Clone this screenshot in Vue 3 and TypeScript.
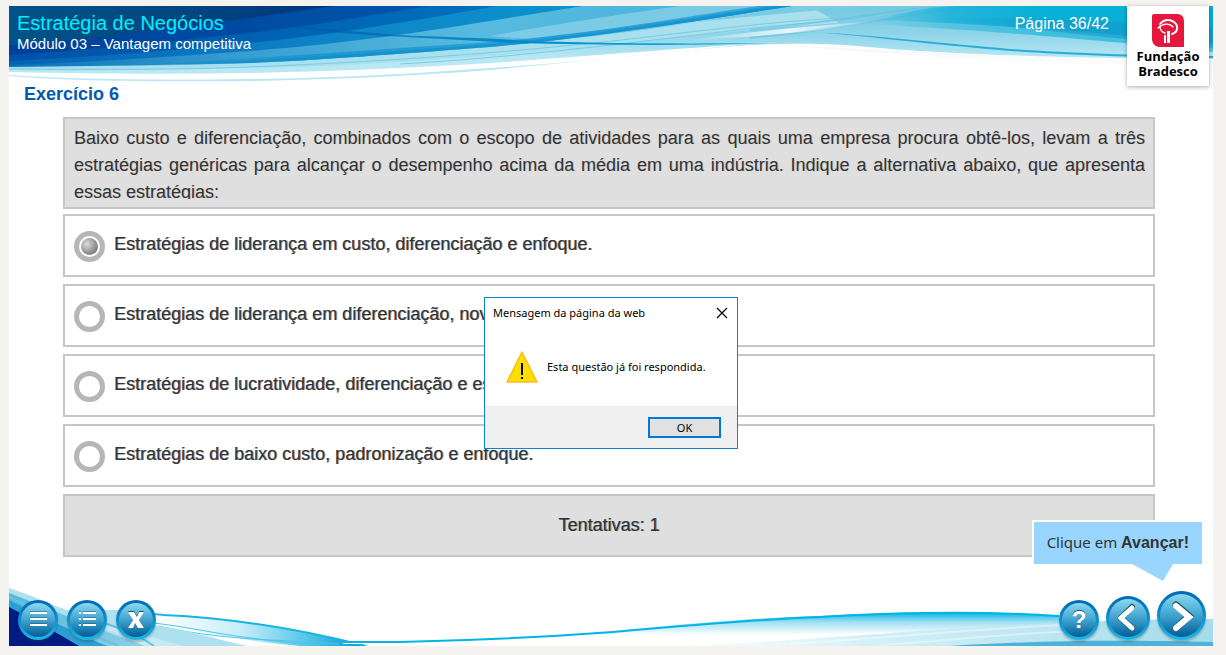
<script setup lang="ts">
import { ref } from 'vue'

const options: string[] = [
  'Estratégias de liderança em custo, diferenciação e enfoque.',
  'Estratégias de liderança em diferenciação, novidade e enfoque.',
  'Estratégias de lucratividade, diferenciação e escopo.',
  'Estratégias de baixo custo, padronização e enfoque.',
]
const selected = ref(0)
const attempts = ref(1)
const dialogOpen = ref(true)
</script>

<template>
  <div class="stage">
    <header class="header">
      <svg class="wave" viewBox="0 0 1204 78" preserveAspectRatio="none" aria-hidden="true">
        <defs>
          <linearGradient id="hNavy" x1="0" y1="0" x2="1" y2="0">
            <stop offset="0" stop-color="#005487" />
            <stop offset=".55" stop-color="#00457f" />
            <stop offset="1" stop-color="#003580" />
          </linearGradient>
          <linearGradient id="hRoyal" x1="0" y1="0" x2="1" y2="0">
            <stop offset="0" stop-color="#003f98" />
            <stop offset="1" stop-color="#0055aa" />
          </linearGradient>
          <linearGradient id="hBlue" x1="0" y1="0" x2="1" y2="0">
            <stop offset="0" stop-color="#0052a8" />
            <stop offset="1" stop-color="#0070bd" />
          </linearGradient>
          <linearGradient id="hSky" x1="0" y1="0" x2="1" y2="0">
            <stop offset="0" stop-color="#0462b2" />
            <stop offset=".6" stop-color="#0f86c8" />
            <stop offset="1" stop-color="#0a92cd" />
          </linearGradient>
          <linearGradient id="hPale" x1="0" y1="0" x2="784" y2="0" gradientUnits="userSpaceOnUse">
            <stop offset="0" stop-color="#0a70bb" />
            <stop offset=".3" stop-color="#379fd0" />
            <stop offset=".6" stop-color="#58bade" />
            <stop offset="1" stop-color="#45b0da" />
          </linearGradient>
          <linearGradient id="hStreak" x1="60" y1="0" x2="784" y2="0" gradientUnits="userSpaceOnUse">
            <stop offset="0" stop-color="#0a80c4" stop-opacity="0" />
            <stop offset=".3" stop-color="#0a8ccc" stop-opacity=".6" />
            <stop offset="1" stop-color="#0a8fcf" stop-opacity=".6" />
          </linearGradient>
          <linearGradient id="hMist" x1="0" y1="0" x2="0" y2="1">
            <stop offset="0" stop-color="#74c8e2" />
            <stop offset=".35" stop-color="#8dd3e8" />
            <stop offset=".7" stop-color="#b9e8f4" />
          </linearGradient>
          <linearGradient id="hTeal" x1="840" y1="0" x2="1040" y2="0" gradientUnits="userSpaceOnUse">
            <stop offset="0" stop-color="#3fbbdc" stop-opacity="0" />
            <stop offset=".5" stop-color="#16b0d8" stop-opacity=".7" />
            <stop offset="1" stop-color="#06b0d6" />
          </linearGradient>
          <linearGradient id="hDeep" x1="880" y1="0" x2="1060" y2="0" gradientUnits="userSpaceOnUse">
            <stop offset="0" stop-color="#2c9fd0" stop-opacity="0" />
            <stop offset="1" stop-color="#1894c8" stop-opacity=".55" />
          </linearGradient>
          <linearGradient id="hCross" x1="220" y1="0" x2="750" y2="0" gradientUnits="userSpaceOnUse">
            <stop offset="0" stop-color="#00408c" stop-opacity=".2" />
            <stop offset=".3" stop-color="#0068b0" stop-opacity=".7" />
            <stop offset=".6" stop-color="#0090ce" />
            <stop offset="1" stop-color="#1fb2de" />
          </linearGradient>
          <linearGradient id="hGleam" x1="680" y1="0" x2="880" y2="0" gradientUnits="userSpaceOnUse">
            <stop offset="0" stop-color="#ffffff" stop-opacity="0" />
            <stop offset=".5" stop-color="#ffffff" stop-opacity=".8" />
            <stop offset="1" stop-color="#ffffff" stop-opacity="0" />
          </linearGradient>
          <linearGradient id="hShade" x1="0" y1="0" x2="0" y2="1">
            <stop offset="0" stop-color="#f4f5f6" />
            <stop offset="1" stop-color="#ffffff" />
          </linearGradient>
        </defs>
        <path d="M760 38C900 46 1010 52 1204 54V62C1050 60 920 52 760 38Z" fill="url(#hShade)" />
        <path d="M0 0H1204V53C1090 53 950 49 870 42C820 37 790 37 740 39C650 46 560 57 481 64C391 71 300 74 241 75C150 76 60 75 0 70Z" fill="url(#hMist)" />
        <path d="M0 66C100 68 170 68 241 67C330 65 400 62 481 57C600 49 680 41 780 36L740 38C600 53 540 58 481 62C400 68 330 72 241 73C150 74 80 74 0 69Z" fill="#fff" />
        <path d="M0 0H800L830 17C720 24 600 40 481 50C391 56 320 61 241 62C140 64 70 65 0 64Z" fill="#a9e0ee" />
        <path d="M0 63C120 64 190 63 241 61C391 55 500 46 604 35C690 25 760 16 830 12M391 58C500 52 620 37 720 25C760 20 800 17 850 12" fill="none" stroke="#7ccbe4" stroke-width="1" />
        <path d="M0 0H784C700 13 600 30 481 41C400 47 330 53 241 57C160 59 80 60 0 61Z" fill="url(#hPale)" />
        <path d="M560 33C640 20 720 12 860 0H784C720 10 640 25 560 33Z" fill="#7bcbe4" />
        <path d="M481 30C560 16 620 7 671 0H760C690 11 600 24 520 33Z" fill="#8ad2e8" opacity=".75" />
        <path d="M100 60C170 58 300 48 481 36C600 26 690 8 750 0H784C700 13 600 30 481 41C400 47 330 53 241 57C190 59 140 60 100 60Z" fill="url(#hStreak)" />
        <path d="M160 59C260 54 380 46 481 38C600 28 700 10 765 0H784C700 13 600 30 481 41C400 47 330 53 241 57Z" fill="url(#hStreak)" />
        <path d="M0 0H574L481 15C400 28 330 38 241 45C160 51 80 56 0 59Z" fill="url(#hSky)" />
        <path d="M0 0H488C420 12 330 28 241 37C160 45 80 51 0 55Z" fill="url(#hBlue)" />
        <path d="M0 0H419C360 10 300 20 241 27C160 36 80 44 0 49Z" fill="url(#hRoyal)" />
        <path d="M0 0H324L241 12C160 23 80 33 0 39Z" fill="url(#hNavy)" />
        <path d="M220 13C270 18 334 25 388 29C430 31 481 32 504 34C560 37 650 38 760 37C680 40 590 39 504 37C440 33 388 31 334 27C290 23 250 18 220 13Z" fill="url(#hCross)" />
        <path d="M680 34C740 26 800 20 880 14C820 26 740 31 680 34Z" fill="url(#hGleam)" />
        <path d="M740 24C830 15 880 5 930 0M740 32C830 24 880 12 960 0" fill="none" stroke="#5cbfde" stroke-width="2" opacity=".5" />
        <path d="M840 17C900 4 930 0 950 0H1204V46C1110 36 980 24 840 17Z" fill="url(#hTeal)" opacity=".6" />
        <path d="M870 14C900 4 930 0 950 0H1204V38C1110 28 1000 19 870 14Z" fill="url(#hTeal)" />
        <path d="M930 12C1020 11 1120 16 1204 22V42C1110 32 1000 22 930 12Z" fill="url(#hDeep)" />
        <path d="M801 26C850 28 900 34 968 40C1030 46 1100 49 1204 50V52C1100 51 1030 48 968 42C900 36 850 29 801 26Z" fill="#28add6" />
      </svg>
      <div class="header-text">
        <div>
          <h1>Estratégia de Negócios</h1>
          <p class="module">Módulo 03 – Vantagem competitiva</p>
        </div>
        <p class="page-number">Página 36/42</p>
      </div>
    </header>

    <div class="brand">
      <svg width="32" height="33" viewBox="0 0 32 33" aria-hidden="true">
        <path d="M2 0H26Q32 1 32 7V33H7Q1 32 0 26V2Q0 0 2 0Z" fill="#e6173d" />
        <path d="M8 10C12 5 18 5 22 8C27 12 26 18 20 20" fill="none" stroke="#fff" stroke-width="2" stroke-linecap="round" />
        <path d="M6 14C11 9 18 9 21 13M8 12C8 16 9 18 13 19" fill="none" stroke="#fff" stroke-width="1.3" stroke-linecap="round" />
        <path d="M12 21H14V29H12ZM15 17H18V29H15Z" fill="#fff" />
      </svg>
      <span>Fundação</span>
      <span>Bradesco</span>
    </div>

    <main class="content">
      <h2>Exercício 6</h2>
      <div class="exercise">
        <div class="question">
          <p>
            Baixo custo e diferenciação, combinados com o escopo de atividades para as quais uma empresa
            procura obtê-los, levam a três estratégias genéricas para alcançar o desempenho acima da média em
            uma indústria. Indique a alternativa abaixo, que apresenta essas estratégias:
          </p>
        </div>
        <div class="options">
          <label v-for="(option, index) in options" :key="option" class="option">
            <input v-model="selected" type="radio" name="answer" :value="index" />
            <span>{{ option }}</span>
          </label>
          <p class="attempts">Tentativas: {{ attempts }}</p>
        </div>
      </div>
    </main>

    <footer class="footer">
      <svg class="wave" viewBox="0 0 1204 60" preserveAspectRatio="none" aria-hidden="true">
        <defs>
          <linearGradient id="fGlow" x1="0" y1="0" x2="0" y2="1">
            <stop offset="0" stop-color="#00b4e4" />
            <stop offset=".3" stop-color="#9edff2" />
            <stop offset=".7" stop-color="#ffffff" />
          </linearGradient>
          <linearGradient id="fTail" x1="145" y1="0" x2="357" y2="0" gradientUnits="userSpaceOnUse">
            <stop offset="0" stop-color="#ffffff" />
            <stop offset=".4" stop-color="#c9eef8" />
            <stop offset=".7" stop-color="#5cc9e9" />
            <stop offset="1" stop-color="#0096cf" />
          </linearGradient>
          <linearGradient id="fWedge" x1="0" y1="0" x2="1" y2="0">
            <stop offset="0" stop-color="#ffffff" />
            <stop offset=".4" stop-color="#d0eff7" />
            <stop offset="1" stop-color="#a6dcec" />
          </linearGradient>
          <linearGradient id="fMid" x1="0" y1="0" x2="1" y2="1">
            <stop offset="0" stop-color="#4fb6dc" />
            <stop offset="1" stop-color="#8ccfe6" />
          </linearGradient>
        </defs>
        <path d="M125 27C135 27 145 28 155 29C240 33 310 48 357 60H290C230 54 190 46 125 33Z" fill="url(#fTail)" />
        <path d="M125 27C135 27 145 28 155 29C240 33 310 48 357 60" fill="none" stroke="#16b4e0" stroke-width="2" />
        <path d="M145 37C200 44 220 52 310 59M150 40C210 54 260 53 330 58" fill="none" stroke="#4fc4e5" stroke-width="1" />
        <path d="M0 2C20 8 40 18 58 24H110L145 39C180 44 210 54 238 60H0Z" fill="#aee1ef" />
        <path d="M0 7C40 22 90 44 136 60H0Z" fill="url(#fMid)" />
        <path d="M40 25C80 36 130 47 175 60H136C100 43 70 33 40 25Z" fill="#c5eaf4" />
        <path d="M0 14C40 34 70 48 98 60H0Z" fill="#2c9fd2" />
        <path d="M0 11C35 28 75 46 110 60M60 27C100 37 130 49 145 60" fill="none" stroke="#69c3e0" stroke-width="2" />
        <path d="M0 21C25 34 48 47 70 60H0Z" fill="#001b84" />
        <path d="M334 55H391C491 53 550 50 604 45C660 39 740 32 811 30C880 26 974 24 1050 30V49C950 45 800 46 724 52C600 57 450 60 391 58H334Z" fill="url(#fGlow)" />
        <path d="M334 56H391C491 54 550 50 604 46C660 41 740 34 811 31C880 27 974 25 1050 30" fill="none" stroke="#00b5e5" stroke-width="2" />
        <path d="M660 60C780 57 900 43 1054 37C1100 34 1150 33 1204 33V60Z" fill="url(#fWedge)" />
        <path d="M780 58C880 52 960 43 1054 39M870 59C950 54 1010 46 1080 45" fill="none" stroke="#fff" stroke-width="2" opacity=".4" />
        <path d="M940 60C1040 54 1110 54 1204 56V60Z" fill="#4cb2da" />
      </svg>
      <nav class="controls">
        <div class="group">
          <button type="button" class="round" aria-label="Menu">
            <svg viewBox="0 0 40 40" aria-hidden="true">
              <path d="M12 12H29M12 18H29M12 24H29" stroke="#28536b" stroke-width="1" fill="none" />
              <path d="M12 13H29M12 19H29M12 25H29" stroke="#fff" stroke-width="2" fill="none" />
            </svg>
          </button>
          <button type="button" class="round" aria-label="Índice">
            <svg viewBox="0 0 40 40" aria-hidden="true">
              <path d="M12 12H14M16 12H29M12 18H14M16 18H29M12 24H14M16 24H29" stroke="#28536b" stroke-width="1" fill="none" />
              <path d="M12 13H14M16 13H29M12 19H14M16 19H29M12 25H14M16 25H29" stroke="#fff" stroke-width="2" fill="none" />
            </svg>
          </button>
          <button type="button" class="round" aria-label="Sair">
            <svg viewBox="0 0 40 40" aria-hidden="true">
              <path d="M12 11H18L21 16L23 11H28L23 19L28 28H22L19 23L17 28H12L17 19Z" fill="#28536b" />
              <path d="M12 12H18L21 17L23 12H28L23 20L28 28H22L19 23L17 28H12L17 20Z" fill="#fff" />
            </svg>
          </button>
        </div>
        <div class="group end">
          <button type="button" class="round help" aria-label="Ajuda">?</button>
          <button type="button" class="round prev" aria-label="Voltar">
            <svg viewBox="0 0 44 44" aria-hidden="true">
              <path d="M26 11L15 22L26 32" fill="none" stroke="#28536b" stroke-width="6" stroke-linecap="round" />
              <path d="M26 12L15 22L26 32" fill="none" stroke="#fff" stroke-width="5" stroke-linecap="round" />
            </svg>
          </button>
          <button type="button" class="round next" aria-label="Avançar">
            <svg viewBox="0 0 49 49" aria-hidden="true">
              <path d="M19 14L32 25L19 37" fill="none" stroke="#28536b" stroke-width="7" stroke-linecap="round" />
              <path d="M19 15L32 26L19 37" fill="none" stroke="#fff" stroke-width="6" stroke-linecap="round" />
            </svg>
          </button>
        </div>
      </nav>
    </footer>

    <div class="hint">
      Clique em <strong>Avançar!</strong>
      <svg class="hint-tail" viewBox="0 0 41 17" aria-hidden="true"><path d="M0 0H41L31 17Z" fill="#99d6ff" /></svg>
    </div>

    <div v-if="dialogOpen" class="dialog" role="alertdialog" aria-labelledby="dialog-title">
      <div class="dialog-bar">
        <span id="dialog-title">Mensagem da página da web</span>
        <button type="button" class="close" aria-label="Fechar" @click="dialogOpen = false">
          <svg width="12" height="12" viewBox="0 0 12 12" aria-hidden="true">
            <path d="M1 1L11 11M11 1L1 11" stroke="#000" stroke-width="1.2" />
          </svg>
        </button>
      </div>
      <div class="dialog-body">
        <svg width="32" height="32" viewBox="0 0 32 32" aria-hidden="true">
          <path d="M16 1L31 31H1Z" fill="#ffde00" stroke="#fbbd1c" stroke-width="1.5" stroke-linejoin="round" />
          <path d="M15 12H17V24H15ZM15 26H17V28H15Z" fill="#000" />
        </svg>
        <span>Esta questão já foi respondida.</span>
      </div>
      <div class="dialog-actions">
        <button type="button" class="ok" @click="dialogOpen = false">OK</button>
      </div>
    </div>
  </div>
</template>

<style>
body {
  margin: 0;
  background: #f4f3ef;
}
</style>

<style scoped>
.stage {
  position: relative;
  box-sizing: border-box;
  display: flex;
  flex-direction: column;
  min-height: calc(100vh - 15px);
  margin: 6px 13px 9px 9px;
  background: #fff;
  color: #333;
  font-family: "Liberation Sans", Arial, sans-serif;
}
h1,
h2,
p {
  margin: 0;
  font-weight: normal;
}
button {
  margin: 0;
  padding: 0;
  cursor: pointer;
}
.header,
.footer {
  display: grid;
}
.header > *,
.footer > * {
  grid-area: 1 / 1;
}
.wave {
  display: block;
  width: 100%;
}
.header .wave {
  height: 78px;
}
.header-text {
  display: flex;
  justify-content: space-between;
  padding: 5px 104px 0 8px;
  color: #fff;
}
h1 {
  font-size: 20px;
  line-height: 24px;
  color: #00f0ff;
}
.module {
  font-size: 15px;
  line-height: 18px;
}
.page-number {
  font-size: 16px;
  line-height: 26px;
}
.brand {
  position: absolute;
  top: 0;
  right: 4px;
  display: flex;
  flex-direction: column;
  align-items: center;
  box-sizing: border-box;
  width: 82px;
  height: 80px;
  padding-top: 8px;
  background: #fff;
  box-shadow: 0 1px 4px rgba(0, 0, 0, 0.35);
  color: #000;
  font-family: "Open Sans", "Noto Sans", sans-serif;
  font-size: 13px;
  font-weight: 700;
  line-height: 15px;
}
.brand svg {
  margin-bottom: 2px;
}
.content {
  flex: 1;
}
h2 {
  padding-left: 15px;
  color: #0059b3;
  font-size: 18px;
  font-weight: bold;
  line-height: 20px;
}
.exercise {
  margin: 13px 58px 0 54px;
}
.question,
.option,
.attempts {
  box-sizing: border-box;
  border: 2px solid #c6c6c6;
  font-size: 18px;
}
.question {
  padding: 6px 8px 8px 9px;
  background: #dfdfdf;
  text-shadow: 1px 0 0 rgba(51, 51, 51, 0.15);
}
.question p {
  height: 74px;
  overflow: hidden;
  line-height: 27px;
  text-align: justify;
}
.options {
  display: grid;
  gap: 7px;
  margin-top: 5px;
}
.option,
.attempts {
  text-shadow: 1px 0 0 rgba(51, 51, 51, 0.5);
}
.option {
  display: flex;
  align-items: flex-start;
  gap: 9px;
  height: 63px;
  padding: 15px 9px 0;
  background: #fff;
}
.option span {
  line-height: 26px;
}
.option input {
  appearance: none;
  box-sizing: border-box;
  flex: none;
  width: 31px;
  height: 31px;
  margin: 0;
  border: 5px solid #b6b6b6;
  border-radius: 50%;
  background: #fff;
}
.option input:checked {
  padding: 2px;
  background: radial-gradient(circle at 6px 6px, #dcdcdc, #6e6e6e 13px) center / 17px 17px no-repeat content-box;
}
.attempts {
  height: 63px;
  background: #dfdfdf;
  line-height: 59px;
  text-align: center;
}
.footer .wave {
  height: 60px;
}
.controls {
  display: flex;
  justify-content: space-between;
  align-items: flex-end;
  padding: 0 7px 6px 9px;
}
.group {
  display: flex;
  align-items: flex-end;
  gap: 9px;
}
.group.end {
  gap: 7px;
}
.round {
  box-sizing: border-box;
  width: 40px;
  height: 40px;
  border: 3px solid transparent;
  border-radius: 50%;
  background:
    linear-gradient(#8ad8f0, #3fa3cf 50%, #005d96) padding-box,
    linear-gradient(#0067b5, #1cb8e3) border-box;
  box-shadow: 0 2px 2px rgba(60, 60, 60, 0.3);
}
.round svg {
  display: block;
  width: 40px;
  height: 40px;
  margin: -3px;
}
.help {
  color: #fff;
  font-family: "Liberation Sans", Arial, sans-serif;
  font-size: 24px;
  font-weight: bold;
  line-height: 34px;
  text-shadow: 0 -1px 0 #28536b;
}
.prev,
.prev svg {
  width: 44px;
  height: 44px;
}
.next,
.next svg {
  width: 49px;
  height: 49px;
}
.hint {
  position: absolute;
  right: 11px;
  bottom: 82px;
  box-sizing: border-box;
  padding: 0 13px 2px;
  border: solid #fff;
  border-width: 2px 0 0 2px;
  background: #99d6ff;
  color: #333;
  font-family: "Noto Sans", "Open Sans", sans-serif;
  font-size: 15px;
  line-height: 40px;
  white-space: nowrap;
}
.hint strong {
  font-family: "Liberation Sans", Arial, sans-serif;
  font-size: 16px;
  line-height: 20px;
}
.hint-tail {
  position: absolute;
  top: 100%;
  right: 29px;
  width: 41px;
  height: 17px;
}
.dialog {
  position: absolute;
  top: 291px;
  left: 50%;
  box-sizing: border-box;
  width: 254px;
  border: 1px solid #0a84d8;
  background: #fff;
  color: #000;
  font-family: "Noto Sans", "Open Sans", sans-serif;
  font-size: 11px;
  line-height: 16px;
  transform: translateX(-50%);
}
.dialog-bar {
  display: flex;
  justify-content: space-between;
  align-items: center;
  height: 30px;
  padding: 0 9px 0 8px;
}
.close {
  display: flex;
  border: 0;
  background: none;
}
.dialog-body {
  display: flex;
  align-items: center;
  gap: 9px;
  height: 78px;
  padding-left: 21px;
}
.dialog-actions {
  display: flex;
  justify-content: flex-end;
  padding: 11px 16px 10px 0;
  background: #f0f0f0;
}
.ok {
  box-sizing: border-box;
  width: 73px;
  height: 21px;
  border: 2px solid #0078d7;
  background: #e1e1e1;
  color: #000;
  font-family: "Noto Sans", "Open Sans", sans-serif;
  font-size: 11px;
  line-height: 17px;
}
</style>
